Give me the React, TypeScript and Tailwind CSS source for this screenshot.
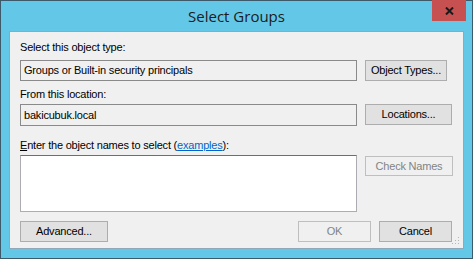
import React from "react";

const btn =
  "h-[21px] flex items-center justify-center bg-[#e1e1e1] border border-[#adadad] text-black";

export default function App() {
  return (
    <div
      className="w-[473px] h-[259px] bg-[#63c8e8] border border-[#3d5a6b] flex flex-col text-[11px] text-black tracking-[-0.2px]"
      style={{ fontFamily: '"Liberation Sans", Arial, sans-serif' }}
    >
      {/* title bar */}
      <div className="relative h-[30px] flex items-center justify-center">
        <span className="text-[15px] text-[#1b1b1b] tracking-normal" style={{ fontFamily: '"Open Sans", "Noto Sans", sans-serif' }}>
          Select Groups
        </span>
        <div className="absolute right-[6px] top-[-1px] w-[34px] h-[21px] bg-[#c75050] flex items-center justify-center">
          <svg width="9" height="8" viewBox="0 0 9 8">
            <path d="M1 0.5 L8 7.5 M8 0.5 L1 7.5" stroke="#1a1a1a" strokeWidth="2" />
          </svg>
        </div>
      </div>

      {/* client area */}
      <div className="relative ml-[8px] w-[455px] h-[218px] bg-[#f0f0f0] border border-[#8fa9b6] pl-[10px] flex flex-col">
        <div className="mt-[9px] h-[13px] leading-[13px]">Select this object type:</div>
        <div className="mt-[6px] flex gap-[8px]">
          <div className="w-[337px] h-[21px] border border-[#8a8a8a] bg-[#f0f0f0] flex items-center px-[3px]">
            Groups or Built-in security principals
          </div>
          <div className={`${btn} w-[82px] h-[20px]`}>Object Types...</div>
        </div>

        <div className="mt-[7px] h-[13px] leading-[13px]">From this location:</div>
        <div className="mt-[3px] flex gap-[8px]">
          <div className="w-[337px] h-[22px] border border-[#8a8a8a] bg-[#f0f0f0] flex items-center px-[3px]">
            bakicubuk.local
          </div>
          <div className={`${btn} w-[87px] h-[21px]`}>Locations...</div>
        </div>

        <div className="mt-[13px] h-[13px] leading-[13px]">
          <span className="underline">E</span>nter the object names to select (
          <span className="text-[#0066cc] underline">examples</span>):
        </div>
        <div className="mt-[3px] flex gap-[8px]">
          <div className="w-[337px] h-[57px] bg-white border border-[#abadb3] border-t-[#6e6e6e]" />
          <div className="mt-[1px] w-[88px] h-[20px] flex items-center justify-center bg-[#f0f0f0] border border-[#bfbfbf] text-[#838383]">
            Check Names
          </div>
        </div>

        <div className="mt-[9px] flex">
          <div className={`${btn} w-[88px]`}>Advanced...</div>
          <div className="ml-[190px] w-[73px] h-[21px] flex items-center justify-center bg-[#f0f0f0] border border-[#bfbfbf] text-[#838383]">
            OK
          </div>
          <div className={`${btn} ml-[8px] w-[73px] border-[#707070]`}>Cancel</div>
        </div>

        {/* size grip */}
        <svg className="absolute right-[2px] bottom-[2px]" width="10" height="10" viewBox="0 0 10 10">
          <rect x="7" y="1" width="1" height="1" fill="#b5b5b5" />
          <rect x="4" y="4" width="1" height="1" fill="#b5b5b5" />
          <rect x="7" y="4" width="1" height="1" fill="#b5b5b5" />
          <rect x="1" y="7" width="1" height="1" fill="#b5b5b5" />
          <rect x="4" y="7" width="1" height="1" fill="#b5b5b5" />
          <rect x="7" y="7" width="1" height="1" fill="#b5b5b5" />
        </svg>
      </div>
    </div>
  );
}
